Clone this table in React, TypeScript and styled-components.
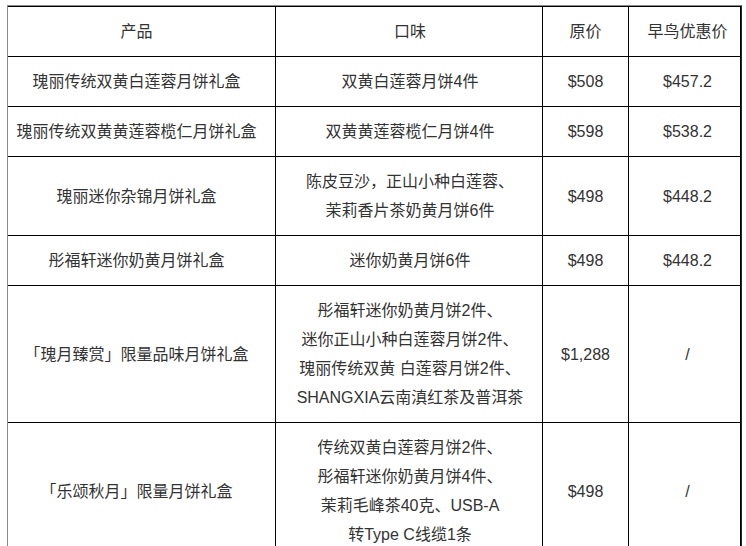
import React from "react";
import styled, { createGlobalStyle } from "styled-components";

const Global = createGlobalStyle`
  html, body {
    margin: 0;
    padding: 0;
    background: #ffffff;
  }
  body {
    font-family: "Liberation Sans", "Noto Sans CJK SC", sans-serif;
    color: #333333;
  }
`;

const Page = styled.div`
  padding: 5px 0 0 7px;
`;

const Table = styled.div`
  display: grid;
  grid-template-columns: 268px 267px 86px 112px;
  width: max-content;
  border-top: 1px solid #8a8a8a;
  border-left: 1px solid #8a8a8a;
  border-right: 1px solid #2a2a2a;
`;

const pads = ["10px 15px 10px 5px", "10px 4px 10px 6px", "10px 5px", "10px 5px 10px 11px"];

const Cell = styled.div<{ $col: number }>`
  box-sizing: border-box;
  display: flex;
  align-items: center;
  justify-content: center;
  text-align: center;
  border-top: 1px solid #000000;
  border-right: 1px solid #000000;
  padding: ${(p) => pads[p.$col]};
  font-size: 16px;
  line-height: 29px;
  color: #333333;
  white-space: nowrap;
`;

type Row = [React.ReactNode, React.ReactNode, string, string];

const rows: Row[] = [
  ["产品", "口味", "原价", "早鸟优惠价"],
  ["瑰丽传统双黄白莲蓉月饼礼盒", "双黄白莲蓉月饼4件", "$508", "$457.2"],
  ["瑰丽传统双黄黄莲蓉榄仁月饼礼盒", "双黄黄莲蓉榄仁月饼4件", "$598", "$538.2"],
  [
    "瑰丽迷你杂锦月饼礼盒",
    <>
      陈皮豆沙，正山小种白莲蓉、
      <br />
      茉莉香片茶奶黄月饼6件
    </>,
    "$498",
    "$448.2",
  ],
  ["彤福轩迷你奶黄月饼礼盒", "迷你奶黄月饼6件", "$498", "$448.2"],
  [
    "「瑰月臻赏」限量品味月饼礼盒",
    <>
      彤福轩迷你奶黄月饼2件、
      <br />
      迷你正山小种白莲蓉月饼2件、
      <br />
      瑰丽传统双黄 白莲蓉月饼2件、
      <br />
      SHANGXIA云南滇红茶及普洱茶
    </>,
    "$1,288",
    "/",
  ],
  [
    "「乐颂秋月」限量月饼礼盒",
    <>
      传统双黄白莲蓉月饼2件、
      <br />
      彤福轩迷你奶黄月饼4件、
      <br />
      茉莉毛峰茶40克、USB-A
      <br />
      转Type C线缆1条
    </>,
    "$498",
    "/",
  ],
];

export default function App() {
  return (
    <>
      <Global />
      <Page>
        <Table>
          {rows.map((r, i) =>
            r.map((c, j) => (
              <Cell key={`${i}-${j}`} $col={j}>
                <span>{c}</span>
              </Cell>
            ))
          )}
        </Table>
      </Page>
    </>
  );
}
